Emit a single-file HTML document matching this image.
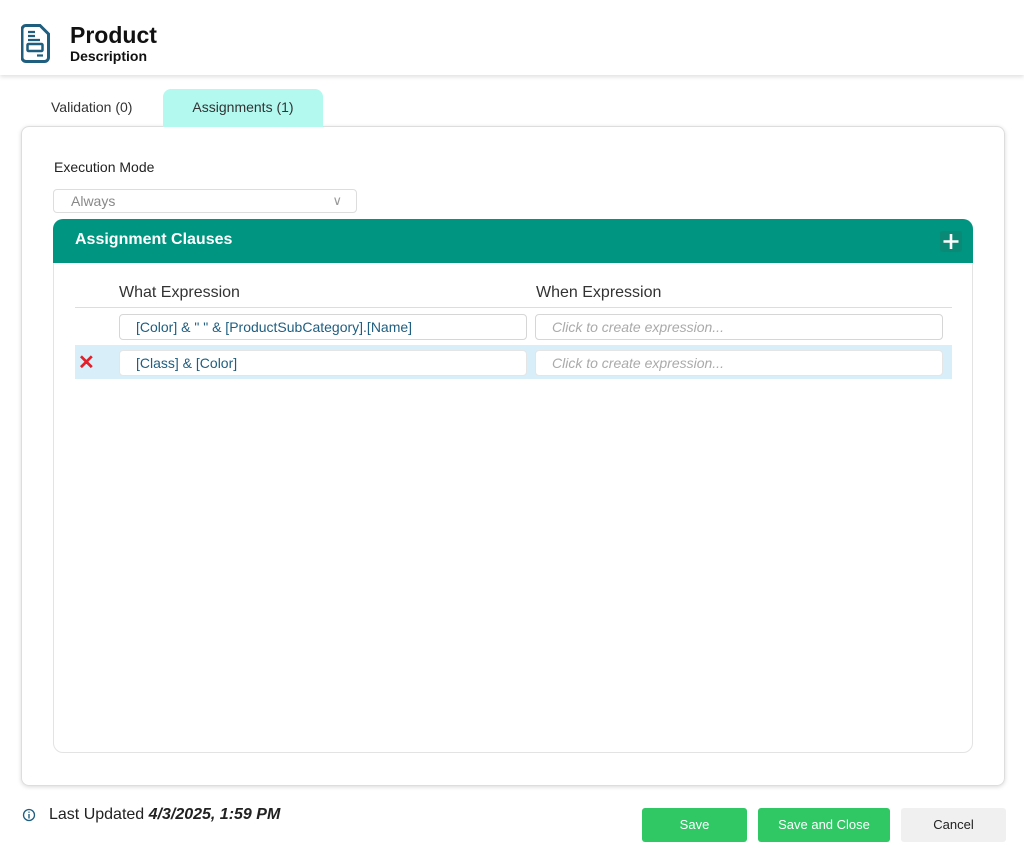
<!DOCTYPE html>
<html><head><style>
*{box-sizing:border-box;margin:0;padding:0}
body{width:1024px;height:848px;background:#fff;font-family:"Liberation Sans",sans-serif;position:relative;overflow:hidden;color:#222}
.a{position:absolute}
.inp{position:absolute;height:26px;border:1px solid #d6d6d6;border-radius:4px;background:#fff;font-size:14px;padding-left:16px;line-height:24px}
.btn{position:absolute;top:808px;height:34px;border-radius:3px;font-size:13px;text-align:center;line-height:34px}
</style></head><body>
<div class="a" style="left:0;top:0;width:1024px;height:75px;background:#fff;box-shadow:0 2px 4px rgba(0,0,0,0.12)"></div>
<svg class="a" style="left:21px;top:24px" width="29" height="39" viewBox="0 0 29 39">
<path d="M5 1.5h14l8.5 8.5v23.5a4 4 0 0 1-4 4H5a4 4 0 0 1-4-4v-28a4 4 0 0 1 4-4z" fill="none" stroke="#1f5e7e" stroke-width="3"/>
<path d="M7 8h7M7 12h7M7 16h12" stroke="#1f5e7e" stroke-width="2.2"/>
<rect x="6.5" y="20" width="15" height="7" rx="1" fill="none" stroke="#1f5e7e" stroke-width="2.5"/>
<path d="M16 31.5h6" stroke="#1f5e7e" stroke-width="2.2"/>
</svg>
<div class="a" style="left:70px;top:22px;font-size:23px;font-weight:bold;color:#111">Product</div>
<div class="a" style="left:70px;top:48px;font-size:14px;font-weight:bold;color:#111">Description</div>
<div class="a" style="left:51px;top:99px;font-size:14px;color:#333">Validation (0)</div>
<div class="a" style="left:21px;top:126px;width:984px;height:660px;border:1px solid #ddd;border-radius:8px;box-shadow:0 1px 4px rgba(0,0,0,0.15)"></div>
<div class="a" style="left:163px;top:89px;width:160px;height:38px;background:#b3f9f0;border-radius:8px 8px 0 0;font-size:14px;text-align:center;line-height:37px;color:#333">Assignments (1)</div>
<div class="a" style="left:54px;top:159px;font-size:14px;color:#222">Execution Mode</div>
<div class="a" style="left:53px;top:189px;width:304px;height:24px;border:1px solid #ddd;border-radius:4px;font-size:14px;color:#888;padding-left:17px;line-height:22px">Always<span class="a" style="right:14px;top:0;color:#999;font-size:13px">∨</span></div>
<div class="a" style="left:53px;top:219px;width:920px;height:534px;border:1px solid #e3e3e3;border-radius:10px"></div>
<div class="a" style="left:53px;top:219px;width:920px;height:44px;background:#009580;border-radius:10px 10px 0 0"></div>
<div class="a" style="left:75px;top:231px;font-size:16px;font-weight:bold;color:#fff">Assignment Clauses</div>
<div class="a" style="left:940px;top:231px;width:22px;height:21px;border-radius:3px;background:#0a8a76"></div>
<svg class="a" style="left:940px;top:231px" width="22" height="21"><path d="M11 3v15M3.5 10.5h15" stroke="#fff" stroke-width="2.6"/></svg>
<div class="a" style="left:119px;top:284px;font-size:16px;color:#333">What Expression</div>
<div class="a" style="left:536px;top:284px;font-size:16px;color:#333">When Expression</div>
<div class="a" style="left:75px;top:307px;width:877px;height:1px;background:#ddd"></div>
<div class="inp" style="left:119px;top:314px;width:408px;color:#1f5e80">[Color] &amp; " " &amp; [ProductSubCategory].[Name]</div>
<div class="inp" style="left:535px;top:314px;width:408px;color:#aaa;font-style:italic">Click to create expression...</div>
<div class="a" style="left:75px;top:345px;width:877px;height:34px;background:#d8eef9"></div>
<div class="a" style="left:78px;top:350px;font-size:20px;font-weight:bold;color:#e0202a">✕</div>
<div class="inp" style="left:119px;top:350px;width:408px;color:#1f5e80;border-color:#e5e5e5">[Class] &amp; [Color]</div>
<div class="inp" style="left:535px;top:350px;width:408px;color:#aaa;font-style:italic;border-color:#e5e5e5">Click to create expression...</div>
<svg class="a" style="left:22px;top:808px" width="14" height="14"><circle cx="7" cy="7" r="5.5" fill="none" stroke="#1f5e80" stroke-width="1.3"/><path d="M7 6v4.5M7 3.6v1.2" stroke="#1f5e80" stroke-width="1.4"/></svg>
<div class="a" style="left:49px;top:806px;font-size:16px;color:#222">Last Updated <b><i>4/3/2025, 1:59 PM</i></b></div>
<div class="btn" style="left:642px;width:105px;background:#2fc865;color:#fff">Save</div>
<div class="btn" style="left:758px;width:132px;background:#2fc865;color:#fff">Save and Close</div>
<div class="btn" style="left:901px;width:105px;background:#f0f0f0;color:#222">Cancel</div>
</body></html>
